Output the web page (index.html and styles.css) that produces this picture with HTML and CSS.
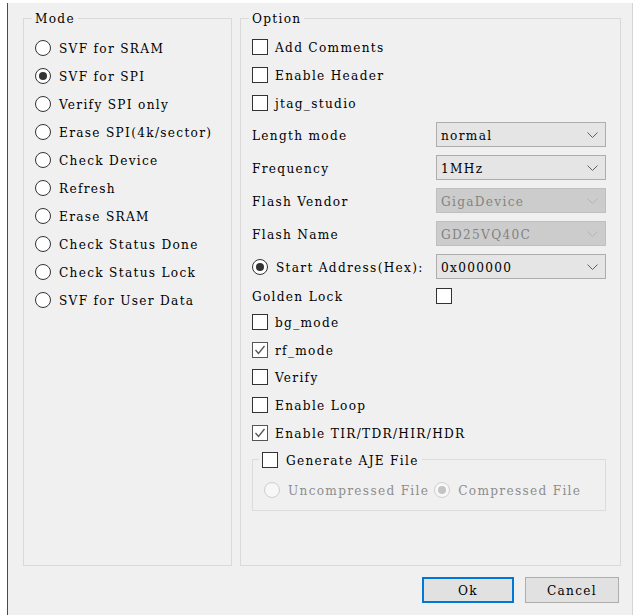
FILE: index.html
```html
<!DOCTYPE html>
<html>
<head>
<meta charset="utf-8">
<link rel="stylesheet" href="styles.css">
</head>
<body>
<div class="dialog">
  <div class="groups">
    <fieldset class="group mode">
      <legend>Mode</legend>
      <div class="row"><span class="radio"></span>SVF for SRAM</div>
      <div class="row"><span class="radio on"></span>SVF for SPI</div>
      <div class="row"><span class="radio"></span>Verify SPI only</div>
      <div class="row"><span class="radio"></span>Erase SPI(4k/sector)</div>
      <div class="row"><span class="radio"></span>Check Device</div>
      <div class="row"><span class="radio"></span>Refresh</div>
      <div class="row"><span class="radio"></span>Erase SRAM</div>
      <div class="row"><span class="radio"></span>Check Status Done</div>
      <div class="row"><span class="radio"></span>Check Status Lock</div>
      <div class="row"><span class="radio"></span>SVF for User Data</div>
    </fieldset>
    <fieldset class="group option">
      <legend>Option</legend>
      <div class="row"><span class="check"></span>Add Comments</div>
      <div class="row"><span class="check"></span>Enable Header</div>
      <div class="row"><span class="check"></span>jtag_studio</div>
      <div class="fields">
        <div class="field"><span class="lbl">Length mode</span><div class="combo"><span>normal</span><svg class="chev" width="11" height="6" viewBox="0 0 11 6"><polyline points="0.5,0.5 5.5,5.5 10.5,0.5"/></svg></div></div>
        <div class="field"><span class="lbl">Frequency</span><div class="combo"><span>1MHz</span><svg class="chev" width="11" height="6" viewBox="0 0 11 6"><polyline points="0.5,0.5 5.5,5.5 10.5,0.5"/></svg></div></div>
        <div class="field"><span class="lbl">Flash Vendor</span><div class="combo disabled"><span>GigaDevice</span><svg class="chev" width="11" height="6" viewBox="0 0 11 6"><polyline points="0.5,0.5 5.5,5.5 10.5,0.5"/></svg></div></div>
        <div class="field"><span class="lbl">Flash Name</span><div class="combo disabled"><span>GD25VQ40C</span><svg class="chev" width="11" height="6" viewBox="0 0 11 6"><polyline points="0.5,0.5 5.5,5.5 10.5,0.5"/></svg></div></div>
        <div class="field"><span class="lbl"><span class="radio on"></span>Start Address(Hex):</span><div class="combo"><span>0x000000</span><svg class="chev" width="11" height="6" viewBox="0 0 11 6"><polyline points="0.5,0.5 5.5,5.5 10.5,0.5"/></svg></div></div>
        <div class="field short"><span class="lbl">Golden Lock</span><span class="check"></span></div>
      </div>
      <div class="row tight"><span class="check"></span>bg_mode</div>
      <div class="row tight"><span class="check on"><svg width="14" height="14" viewBox="0 0 14 14"><polyline points="2.5,7 5.5,10.5 11.5,3"/></svg></span>rf_mode</div>
      <div class="row tight"><span class="check"></span>Verify</div>
      <div class="row tight"><span class="check"></span>Enable Loop</div>
      <div class="row tight"><span class="check on"><svg width="14" height="14" viewBox="0 0 14 14"><polyline points="2.5,7 5.5,10.5 11.5,3"/></svg></span>Enable TIR/TDR/HIR/HDR</div>
      <fieldset class="sub">
        <legend><span class="check"></span>Generate AJE File</legend>
        <div class="row disabled">
          <span class="radio"></span>Uncompressed File
          <span class="radio on second"></span>Compressed File
        </div>
      </fieldset>
    </fieldset>
  </div>
  <div class="buttons">
    <button class="btn default">Ok</button>
    <button class="btn">Cancel</button>
  </div>
</div>
</body>
</html>
```

FILE: styles.css
```css
html, body {
  margin: 0;
  padding: 0;
  background: #ffffff;
}

body {
  font-family: "DejaVu Serif Condensed", "DejaVu Serif", "Liberation Serif", serif;
  font-stretch: condensed;
  font-size: 13.5px;
  letter-spacing: 1.3px;
  color: #000;
}

.dialog {
  box-sizing: border-box;
  margin: 3px 0 0 7px;
  width: 626px;
  height: 612px;
  background: #f0f0f0;
  border-left: 1px solid #4a4a4a;
  border-right: 1px solid #d4d4d4;
  padding-top: 7px;
}

.groups {
  display: flex;
  height: 556px;
}

fieldset {
  margin: 0;
  padding: 0;
  min-width: 0;
  border: 1px solid #d9d9d9;
  box-sizing: border-box;
}

legend {
  line-height: 16px;
  height: 16px;
  padding: 0 3px;
  margin-left: -3px;
}

.group {
  height: 556px;
}

.mode {
  margin-left: 15px;
  width: 209px;
  padding: 8px 0 0 11px;
}

.option {
  margin-left: 8px;
  width: 381px;
  padding: 7px 0 0 11px;
}

.row {
  display: flex;
  align-items: center;
  height: 28px;
  white-space: nowrap;
}

.row.tight {
  height: 27.75px;
}

.radio {
  box-sizing: border-box;
  width: 16px;
  height: 16px;
  border: 1px solid #333;
  border-radius: 50%;
  background: #fff;
  margin-right: 8px;
  flex: none;
  display: flex;
  align-items: center;
  justify-content: center;
}

.radio.on::after {
  content: "";
  width: 8px;
  height: 8px;
  border-radius: 50%;
  background: #333;
}

.check {
  box-sizing: border-box;
  width: 16px;
  height: 16px;
  border: 1px solid #333;
  background: #fff;
  margin-right: 7px;
  flex: none;
  display: flex;
  align-items: center;
  justify-content: center;
}

.check.on {
  border-color: #555;
}

.check svg polyline {
  fill: none;
  stroke: #555;
  stroke-width: 1.3;
}

.fields {
  margin-top: 1px;
}

.field {
  display: grid;
  grid-template-columns: 184px 170px;
  align-items: center;
  height: 33px;
}

.field.short {
  height: 25px;
}

.lbl {
  display: flex;
  align-items: center;
  white-space: nowrap;
}

.combo {
  box-sizing: border-box;
  height: 25px;
  background: #e5e5e5;
  border: 1px solid #adadad;
  display: flex;
  align-items: center;
  justify-content: space-between;
  padding: 0 7px 0 4px;
}

.combo.disabled {
  background: #cccccc;
  border-color: #bfbfbf;
  color: #838383;
}

.chev polyline {
  fill: none;
  stroke: #606060;
  stroke-width: 1;
}

.combo.disabled .chev polyline {
  stroke: #b4b4b4;
}

.sub {
  margin: 5px 14px 0 0;
  padding: 8px 0 6px 11px;
  border-color: #dcdcdc;
}

.sub legend {
  display: flex;
  align-items: center;
  margin-left: -5px;
}

.sub legend .check {
  margin-right: 8px;
}

.row.disabled {
  color: #8d8d8d;
}

.row.disabled .radio {
  border-color: #cfcfcf;
  background: #f7f7f7;
}

.row.disabled .radio.on::after {
  background: #c4c4c4;
}

.radio.second {
  margin-left: 5px;
}

.buttons {
  display: flex;
  justify-content: flex-end;
  gap: 11px;
  margin: 11px 13px 0 0;
}

.btn {
  box-sizing: border-box;
  width: 94px;
  height: 26px;
  background: #e1e1e1;
  border: 1px solid #adadad;
  font: inherit;
  letter-spacing: inherit;
  color: #000;
  padding: 0;
}

.btn.default {
  width: 92px;
  border: 2px solid #0078d7;
}
```
